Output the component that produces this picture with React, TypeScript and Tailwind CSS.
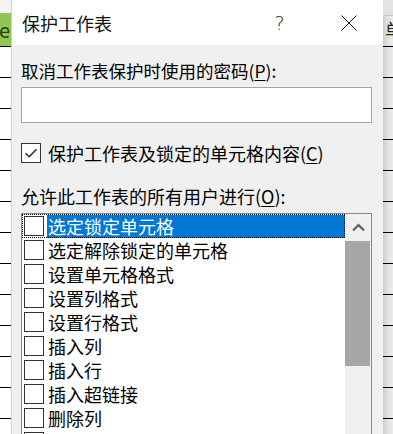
import React from "react";

const items = [
  "选定锁定单元格",
  "选定解除锁定的单元格",
  "设置单元格格式",
  "设置列格式",
  "设置行格式",
  "插入列",
  "插入行",
  "插入超链接",
  "删除列",
  "删除行",
];

const gridRows = Array.from({ length: 13 });

function Box({ checked = false }: { checked?: boolean }) {
  return (
    <div className="flex h-[20px] w-[20px] shrink-0 items-center justify-center border border-[#333333] bg-white">
      {checked && (
        <svg width="14" height="12" viewBox="0 0 14 12" fill="none">
          <path d="M1.5 6.2 L5.2 9.8 L12.5 2.2" stroke="#222" strokeWidth="1.4" />
        </svg>
      )}
    </div>
  );
}

export default function App() {
  return (
    <div className="flex h-[434px] w-[393px] overflow-hidden bg-white text-black [font-family:'Noto_Sans_CJK_SC','Microsoft_YaHei',sans-serif]">
      {/* left spreadsheet strip */}
      <div className="flex w-[11px] shrink-0 flex-col bg-white">
        <div className="h-[13px] shrink-0 bg-[#f3f3f3]" />
        <div className="flex h-[34px] shrink-0 items-center justify-end overflow-hidden border-b border-black bg-[#8fc752] pr-[1px] text-[20px] leading-[30px] text-[#27400f]">
          e
        </div>
        {gridRows.map((_, i) => (
          <div key={i} className="h-[31px] shrink-0 border-b border-black" />
        ))}
      </div>

      {/* dialog */}
      <div className="flex w-[372px] shrink-0 flex-col border-l border-[#d4d4d4] bg-[#f0f0f0]">
        {/* title bar */}
        <div className="flex h-[45px] shrink-0 items-center bg-white">
          <div className="flex-1 pl-[10px] text-[18px] leading-[24px] text-[#111]">保护工作表</div>
          <div className="flex h-[45px] w-[69px] items-center justify-center text-[19px] leading-[24px] text-[#222] [font-family:'DejaVu_Sans',sans-serif] font-extralight">
            ?
          </div>
          <div className="flex h-[45px] w-[69px] items-center justify-center">
            <svg width="16" height="16" viewBox="0 0 16 16" fill="none">
              <path d="M0.5 0.5 L15.5 15.5 M15.5 0.5 L0.5 15.5" stroke="#111" strokeWidth="1" />
            </svg>
          </div>
        </div>

        {/* body */}
        <div className="flex min-h-0 flex-1 flex-col pl-[9px] pr-[11px]">
          <div className="mt-[14px] text-[17.5px] leading-[24px]">
            取消工作表保护时使用的密码(<span className="underline underline-offset-2">P</span>):
          </div>
          <div className="mt-[4px] h-[36px] w-[351px] shrink-0 border border-[#a5a5a5] bg-white" />

          <div className="mt-[18px] flex h-[24px] items-center">
            <Box checked />
            <div className="ml-[7px] text-[18px] leading-[24px]">
              保护工作表及锁定的单元格内容(<span className="underline underline-offset-2">C</span>)
            </div>
          </div>

          <div className="mt-[19px] text-[18px] leading-[24px]">
            允许此工作表的所有用户进行(<span className="underline underline-offset-2">O</span>):
          </div>

          <div className="mt-[5px] flex min-h-0 w-[351px] flex-1 overflow-hidden border border-t-[#828790] border-x-[#828790] border-b-0 bg-white">
            <div className="flex w-[323px] shrink-0 flex-col">
              {items.map((t, i) => (
                <div
                  key={t}
                  className={
                    i === 0
                      ? "flex h-[24px] shrink-0 items-center outline-1 -outline-offset-1 outline-dotted outline-black"
                      : "flex h-[24px] shrink-0 items-center"
                  }
                >
                  <div className="ml-[2px]">
                    <Box />
                  </div>
                  <div
                    className={
                      i === 0
                        ? "ml-[3px] flex h-[23px] flex-1 items-center bg-[#0078d7] pl-[1px] text-[18px] leading-[24px] text-white"
                        : "ml-[3px] flex h-[23px] flex-1 items-center pl-[1px] text-[18px] leading-[24px]"
                    }
                  >
                    {t}
                  </div>
                </div>
              ))}
            </div>
            {/* scrollbar */}
            <div className="flex w-[26px] shrink-0 flex-col bg-[#f0f0f0]">
              <div className="flex h-[27px] shrink-0 items-center justify-center bg-[#f0f0f0]">
                <svg width="13" height="9" viewBox="0 0 13 9" fill="none">
                  <path d="M1 7.5 L6.5 2 L12 7.5" stroke="#5f5f5f" strokeWidth="2.2" />
                </svg>
              </div>
              <div className="h-[125px] w-[25px] shrink-0 bg-[#a6a6a6]" />
            </div>
          </div>
        </div>
      </div>

      {/* right spreadsheet strip with dialog shadow */}
      <div className="flex w-[10px] shrink-0 flex-col bg-gradient-to-r from-[#cdcdcd] via-[#e2e2e2] to-[#ececec]">
        <div className="h-[16px] shrink-0 border-b border-[#c9c9c9] bg-[#e3e3e3]" />
        <div className="relative h-[31px] shrink-0 overflow-hidden border-b border-black">
          <div className="ml-[2px] mt-[2px] w-[20px] text-[18px] leading-[22px] text-[#222]">单</div>
        </div>
        {gridRows.map((_, i) => (
          <div key={i} className="h-[31px] shrink-0 border-b border-black" />
        ))}
      </div>
    </div>
  );
}
